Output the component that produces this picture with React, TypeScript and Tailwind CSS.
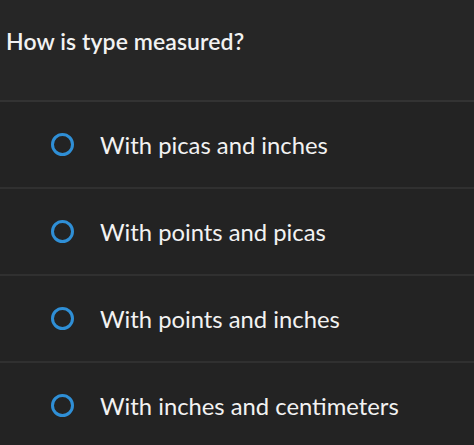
const options = [
  'With picas and inches',
  'With points and picas',
  'With points and inches',
  'With inches and centimeters',
];

export default function App() {
  return (
    <div
      className="w-[474px] h-[445px] overflow-hidden bg-[#232323] text-[#f2f2f2]"
      style={{ fontFamily: 'Lato, "Open Sans", sans-serif' }}
    >
      <div className="h-[102px] bg-[#262626] px-[6px] pt-[25px] border-b-2 border-[#333333]">
        <h1 className="text-[23px] font-semibold leading-[32px] tracking-[0.1px]">How is type measured?</h1>
      </div>
      {options.map((opt) => (
        <div
          key={opt}
          className="h-[87px] flex items-center border-b-2 border-[#303030] pl-[51px]"
        >
          <span className="w-[23px] h-[23px] rounded-full border-[3px] border-[#2f8fd6] shrink-0" />
          <span className="ml-[26px] text-[23.8px] leading-[30px]">{opt}</span>
        </div>
      ))}
    </div>
  );
}
